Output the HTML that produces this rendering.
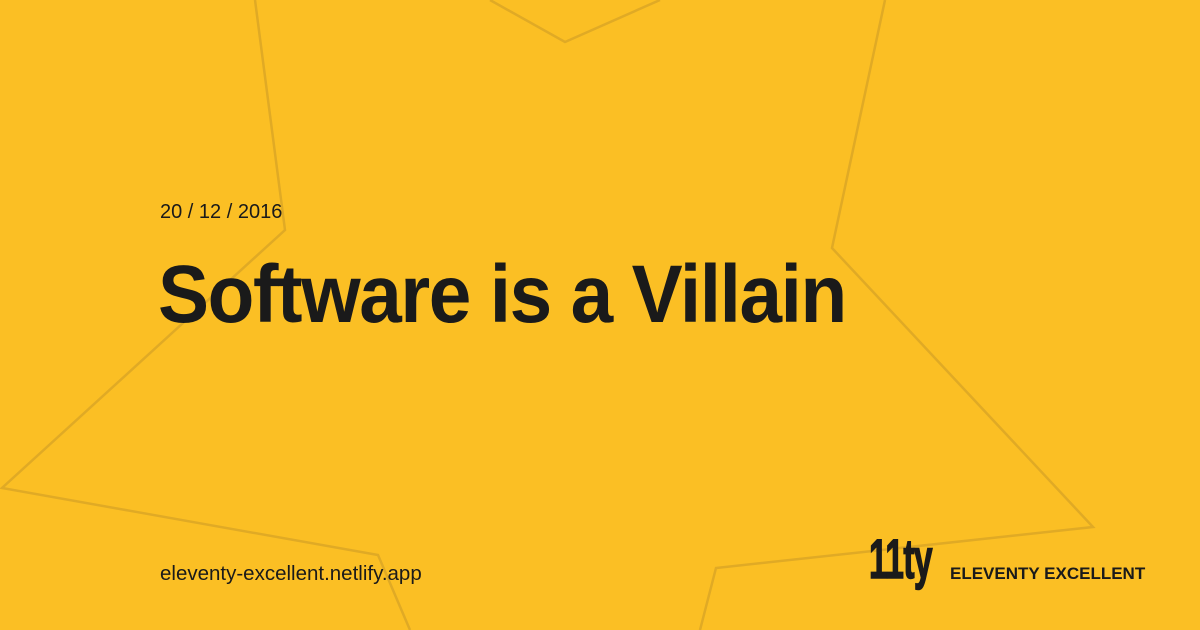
<!DOCTYPE html>
<html><head><style>
html,body{margin:0;padding:0}
body{width:1200px;height:630px;background:#fbbf24;position:relative;overflow:hidden;font-family:"Liberation Sans",Arial,sans-serif;color:#1a1a1a}
svg{position:absolute;left:0;top:0}
.t{position:absolute;white-space:nowrap}
</style></head><body>
<svg width="1200" height="630"><g fill="none" stroke="#e0aa25" stroke-width="2.5">
<polyline points="255,0 285,230 2,488 378,555 410,630"/>
<polyline points="885,0 832,248 1093,527 716,568 700,630"/>
<polyline points="490,0 565,42 660,0"/>
</g></svg>
<div class="t" style="left:160px;top:201px;font-size:20px">20 / 12 / 2016</div>
<div class="t" style="left:158px;top:248px;font-size:82px;font-weight:bold;letter-spacing:-1.5px;transform:scaleX(0.933);transform-origin:left top">Software is a Villain</div>
<div class="t" style="left:160px;top:562px;font-size:20.5px">eleventy-excellent.netlify.app</div>
<div class="t" style="left:869px;top:526px;font-size:56px;font-weight:bold;transform:scaleX(0.6);transform-origin:left top;letter-spacing:-1px;-webkit-text-stroke:1.5px #1a1a1a">11ty</div>
<div class="t" style="left:950px;top:564px;font-size:17px;font-weight:bold">ELEVENTY EXCELLENT</div>
</body></html>
